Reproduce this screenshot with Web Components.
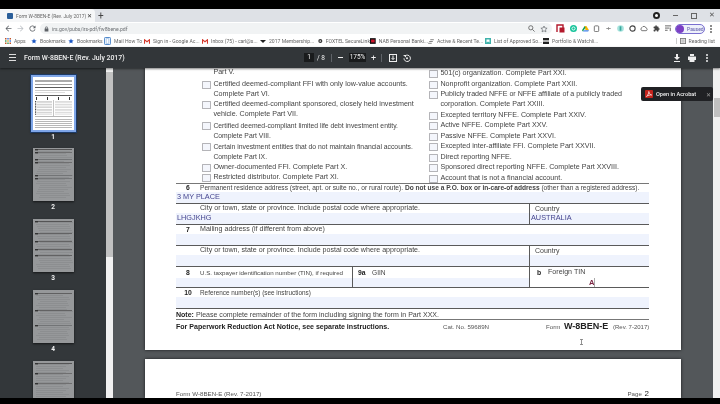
<!DOCTYPE html>
<html><head><meta charset="utf-8"><style>
html,body{margin:0;padding:0;background:#000;width:720px;height:404px;overflow:hidden}
body{display:flex;flex-direction:column;font-family:"Liberation Sans",Arial,sans-serif;filter:blur(.3px)}
.blk{height:9px;flex:none;background:#000}.blk.b{height:6px}
#main{flex:1;display:flex;min-height:0;background:#525659}
</style></head><body>
<div class="blk"></div>
<x-chrome></x-chrome>
<x-pdfbar></x-pdfbar>
<div id="main"><x-thumbs></x-thumbs><x-viewer>
<x-page first>
 <x-columns>
  <div slot="l">
   <x-check nobox>Part V.</x-check>
   <x-check m="2.5">Certified deemed-compliant FFI with only low-value accounts.<br>Complete Part VI.</x-check>
   <x-check m="1.25">Certified deemed-compliant sponsored, closely held investment<br>vehicle. Complete Part VII.</x-check>
   <x-check m="2" style="font-size:6.8px">Certified deemed-compliant limited life debt investment entity.<br>Complete Part VIII.</x-check>
   <x-check m="2" style="font-size:6.8px">Certain investment entities that do not maintain financial accounts.<br>Complete Part IX.</x-check>
   <x-check m="2">Owner-documented FFI. Complete Part X.</x-check>
   <x-check m=".5">Restricted distributor. Complete Part XI.</x-check>
  </div>
  <div slot="r">
   <x-check m="1.25">501(c) organization. Complete Part XXI.</x-check>
   <x-check m="1">Nonprofit organization. Complete Part XXII.</x-check>
   <x-check m="1" style="font-size:7.1px">Publicly traded NFFE or NFFE affiliate of a publicly traded<br>corporation. Complete Part XXIII.</x-check>
   <x-check m="1.5">Excepted territory NFFE. Complete Part XXIV.</x-check>
   <x-check m="1">Active NFFE. Complete Part XXV.</x-check>
   <x-check m="1">Passive NFFE. Complete Part XXVI.</x-check>
   <x-check m="1">Excepted inter-affiliate FFI. Complete Part XXVII.</x-check>
   <x-check m="1">Direct reporting NFFE.</x-check>
   <x-check m="1">Sponsored direct reporting NFFE. Complete Part XXVIII.</x-check>
   <x-check m="1">Account that is not a financial account.</x-check>
  </div>
 </x-columns>
 <x-row h="21" top>
  <x-cell style="flex:1;--lh:8px" num="6" value="3 MY PLACE">Permanent residence address (street, apt. or suite no., or rural route). <b>Do not use a P.O. box or in-care-of address</b> (other than a registered address).</x-cell>
 </x-row>
 <x-row h="21">
  <x-cell style="width:353px;--fs:7.1px" num=" " value="LHGJKHG">City or town, state or province. Include postal code where appropriate.</x-cell>
  <x-cell style="flex:1;--fs:7px" side value="AUSTRALIA">Country</x-cell>
 </x-row>
 <x-row h="21"><x-cell style="flex:1;--fs:7.1px" num="7">Mailing address (if different from above)</x-cell></x-row>
 <x-row h="21">
  <x-cell style="width:353px;--fs:7.1px" num=" ">City or town, state or province. Include postal code where appropriate.</x-cell>
  <x-cell style="flex:1;--fs:7px" side>Country</x-cell>
 </x-row>
 <x-row h="21">
  <x-cell style="width:176px;--fs:6.2px;--lh:11px" num="8">U.S. taxpayer identification number (TIN), if required</x-cell>
  <x-cell style="width:177px;--fs:6.6px;--lh:11px" side num="9a" w="14">GIIN</x-cell>
  <x-cell style="flex:1;--fs:7.1px;--lh:11px;--pl:7px" side num="b" w="11" nofill typed="A">Foreign TIN</x-cell>
 </x-row>
 <x-row h="21"><x-cell style="flex:1;--fs:6.4px" num="10">Reference number(s) (see instructions)</x-cell></x-row>
 <x-note></x-note>
 <x-pagefoot></x-pagefoot>
</x-page>
<x-page>
 <x-nextpage></x-nextpage>
</x-page>
<x-acrobat></x-acrobat>
<x-ibeam></x-ibeam>
</x-viewer></div>
<div class="blk b"></div>
<script>
const def=(name,html)=>customElements.define(name,class extends HTMLElement{
  connectedCallback(){ if(this.shadowRoot) return; const r=this.attachShadow({mode:'open'}); r.innerHTML=typeof html==='function'?html(this):html; }
});

const ico={
 back:'<svg width="9" height="9" viewBox="0 0 24 24"><path d="M20 11H7.8l5.6-5.6L12 4l-8 8 8 8 1.4-1.4L7.8 13H20z" fill="#5f6368"/></svg>',
 fwd:'<svg width="9" height="9" viewBox="0 0 24 24"><path d="M4 11h12.2l-5.6-5.6L12 4l8 8-8 8-1.4-1.4 5.6-5.6H4z" fill="#bdc1c6"/></svg>',
 reload:'<svg width="9" height="9" viewBox="0 0 24 24"><path d="M17.6 6.4A8 8 0 1 0 19.7 14h-2.1A6 6 0 1 1 12 6c1.7 0 3.1.7 4.2 1.8L13 11h7V4z" fill="#5f6368"/></svg>',
 lock:'<svg width="5" height="6" viewBox="0 0 12 14"><path d="M3 6V4a3 3 0 0 1 6 0v2h1.500v7h-9V6zm1.500 0h3V4a1.500 1.500 0 0 0-3 0z" fill="#5f6368"/></svg>',
 star:'<svg width="8" height="8" viewBox="0 0 24 24"><path d="M12 3l2.800 6 6.500.7-4.800 4.400 1.300 6.400L12 17.300l-5.800 3.200 1.300-6.400L2.700 9.700 9.200 9z" fill="none" stroke="#5f6368" stroke-width="2"/></svg>',
 bm:'<svg width="6" height="6" viewBox="0 0 24 24"><path d="M12 2l3 7 7.500.6-5.700 4.900 1.800 7.500L12 18l-6.600 4 1.800-7.500L1.500 9.600 9 9z" fill="#1a56c4"/></svg>',
 apps:'<svg width="6" height="6" viewBox="0 0 8 8"><g fill="#c5562a"><rect width="2" height="2"/><rect x="3" width="2" height="2" fill="#3f7de0"/><rect x="6" width="2" height="2"/><rect y="3" width="2" height="2" fill="#3f9a55"/><rect x="3" y="3" width="2" height="2" fill="#d9a32c"/><rect x="6" y="3" width="2" height="2" fill="#3f7de0"/><rect y="6" width="2" height="2"/><rect x="3" y="6" width="2" height="2" fill="#3f9a55"/><rect x="6" y="6" width="2" height="2"/></g></svg>',
 gmail:'<svg width="6" height="5" viewBox="0 0 8 7"><rect width="8" height="7" fill="#fff"/><path d="M.5 6.500V1L4 3.800 7.500 1v5.500" fill="none" stroke="#d5392c" stroke-width="1.500"/></svg>',
 book:'<svg width="7" height="8" viewBox="0 0 8 9"><rect x=".5" y=".5" width="7" height="8" rx="1" fill="#e7f0fb" stroke="#3b7ac4"/><rect x="2.500" y="2" width="3" height="5" fill="#fff" stroke="#7aa7d8" stroke-width=".5"/></svg>',
 dark:'<svg width="6" height="4" viewBox="0 0 8 5"><path d="M0 1h8L4 5z" fill="#222"/></svg>',
 fox:'<svg width="6" height="6" viewBox="0 0 8 8"><circle cx="4" cy="4" r="3.500" fill="#333"/><circle cx="4" cy="4" r="1.500" fill="#ddd"/></svg>',
 nab:'<svg width="6" height="6" viewBox="0 0 8 8"><rect width="8" height="8" fill="#111"/><rect x="1.500" y="2" width="5" height="4" fill="#d0142c"/></svg>',
 lines:'<svg width="6" height="5" viewBox="0 0 8 7"><path d="M3 1h5M1.500 3.500h5M0 6h5" stroke="#555" stroke-width="1"/></svg>',
 teal:'<svg width="6" height="6" viewBox="0 0 8 8"><rect width="8" height="8" fill="#3fb2ab"/><path d="M2 2h4v4L4 4.800 2 6z" fill="#fff"/></svg>',
 port:'<svg width="6" height="6" viewBox="0 0 8 8"><rect width="8" height="8" fill="#222"/><rect y="3" width="8" height="2" fill="#ddd"/></svg>',
 list:'<svg width="6" height="6" viewBox="0 0 7 7"><rect x=".5" y=".5" width="6" height="6" fill="none" stroke="#777"/><path d="M1.500 2.200h4M1.500 3.500h4M1.500 4.800h4" stroke="#777" stroke-width=".6"/></svg>',
};

def('x-chrome',()=>{
 const bms=[['apps','Apps',26],['bm','Bookmarks',37],['bm','Bookmarks',36],['book','Mail How To',40],['gmail','Sign in - Google Ac...',58],['gmail','Inbox (75) - carl@s...',58],['dark','2017 Membership...',58],['fox','FOXTEL SecureLink',52],['nab','NAB Personal Banki...',58],['lines','Active &amp; Recent Te...',57],['teal','List of Approved So...',58],['port','Portfolio &amp; Watchli...',58]];
 const exts=[
  '<svg width="9" height="9" viewBox="0 0 9 9"><path d="M1 8V1h6v3" fill="none" stroke="#b3192c" stroke-width="1.400"/><rect x="3.500" y="3.500" width="5" height="5" fill="#b3192c"/></svg>',
  '<svg width="7" height="7" viewBox="0 0 8 8"><circle cx="4" cy="4" r="4" fill="#15c39a"/><circle cx="4" cy="4" r="1.800" fill="none" stroke="#fff"/></svg>',
  '<svg width="7" height="7" viewBox="0 0 8 8"><path d="M3 1h2l3 5H4z" fill="#f4b400"/><path d="M3 1L0 6l1 1.500L4 3z" fill="#0f9d58"/><path d="M1 7.500h6L8 6H2.500z" fill="#4285f4"/></svg>',
  '<svg width="7" height="7" viewBox="0 0 8 8"><rect x="1.500" y="1" width="5" height="6.500" rx="1" fill="none" stroke="#666"/></svg>',
  '<svg width="7" height="7" viewBox="0 0 8 8"><path d="M1.500 4h5M4 2.500v3" stroke="#888"/></svg>',
  '<svg width="7" height="7" viewBox="0 0 8 8"><circle cx="4" cy="4" r="3.800" fill="#a7e3dd"/><rect x="3" y="1.500" width="2" height="5" fill="#38a89d"/></svg>',
  '<svg width="7" height="7" viewBox="0 0 8 8"><circle cx="4" cy="4" r="3" fill="none" stroke="#444" stroke-width="1.300"/></svg>',
  '<svg width="8" height="7" viewBox="0 0 9 8"><path d="M2 6.500a2 2 0 0 1 .2-3.600 2.500 2.500 0 0 1 4.600.5A1.600 1.600 0 0 1 7 6.500z" fill="none" stroke="#666"/></svg>',
  '<svg width="7" height="7" viewBox="0 0 24 24"><path d="M20.500 11H19V7a2 2 0 0 0-2-2h-4V3.500a2.500 2.500 0 0 0-5 0V5H4a2 2 0 0 0-2 2v3.800h1.500a2.700 2.700 0 0 1 0 5.400H2V20a2 2 0 0 0 2 2h3.800v-1.500a2.700 2.700 0 0 1 5.400 0V22H17a2 2 0 0 0 2-2v-4h1.500a2.500 2.500 0 0 0 0-5z" fill="#444"/></svg>',
  '<svg width="7" height="7" viewBox="0 0 8 8"><path d="M0 1h7M0 3.500h5M0 6h3" stroke="#555"/><path d="M6 3v4" stroke="#555"/></svg>'];
 return `<style>
 :host{display:block;flex:none;font-family:Roboto,"Liberation Sans",sans-serif;color:#555}
 .tabs{height:13px;background:#dee1e6;display:flex;align-items:center}
 .tab{width:95px;height:13px;margin-left:0;background:#f6f7f8;border-radius:0 4px 0 0;display:flex;align-items:center;box-sizing:border-box;padding:0 3px 0 7px;gap:3px;font-size:4.900px;color:#666;white-space:nowrap}
 .fav{width:6px;height:6px;background:#2b5f9a;border-radius:1px;flex:none}
 .tt{flex:1;min-width:0}
 .plus{margin-left:3px;font-size:10px;color:#444;line-height:10px}
 .sp{flex:1}
 .win{display:flex;align-items:center;margin-right:5px;gap:9px;color:#555}
 .tb{height:13px;background:#fff;display:flex;align-items:center;padding:0 4px;box-sizing:border-box}
 .nav{display:flex;gap:3px;margin-right:3px}
 .omni{width:512px;flex:none;height:11px;border-radius:6px;background:#f1f3f4;display:flex;align-items:center;padding:0 4px;box-sizing:border-box;font-size:5.100px;gap:3px;color:#6a6e72}
 .omni .end{margin-left:auto;display:flex;gap:5px;align-items:center}
 .ext{display:flex;align-items:center;width:116px;margin-left:4px;justify-content:space-between;flex:none}
 .paused{width:30px;height:10px;border:1px solid #7a6fd0;border-radius:6px;box-sizing:border-box;display:flex;align-items:center;gap:3px;font-size:5px;color:#5a55a8;margin-left:3px;flex:none;background:#eef1fb}
 .paused i{width:8px;height:8px;background:#7b3fc4;border-radius:50%;flex:none}
 .dots{width:2px;height:2px;background:#666;border-radius:50%;box-shadow:0 -3px #666,0 3px #666;margin-left:5px;flex:none}
 .bm{height:12px;background:#fff;display:flex;align-items:center;padding-left:5px;font-size:5.100px;color:#666;white-space:nowrap}
 .it{display:flex;align-items:center;gap:3px;flex:none;overflow:hidden}
 .rl{margin-left:auto;display:flex;align-items:center;gap:3px;margin-right:5px;border-left:1px solid #ccc;padding-left:3px}
 </style>
 <div class="tabs"><div class="tab"><span class="fav"></span><span class="tt">Form W-8BEN-E (Rev. July 2017)</span><span style="color:#333;font-size:6px">✕</span></div><span class="plus">+</span><span class="sp"></span>
 <div class="win"><span style="width:3px;height:3px;border-radius:50%;border:2px solid #222;background:#fff"></span><span style="width:5px;height:1px;background:#666;margin-left:4px"></span><span style="width:4px;height:4px;border:1px solid #666;margin-left:4px"></span><span style="font-size:7px;color:#555;margin-left:3px;line-height:7px">✕</span></div></div>
 <div class="tb"><div class="nav">${ico.back}${ico.fwd}${ico.reload}</div>
 <div class="omni">${ico.lock}<span>irs.gov/pubs/irs-pdf/fw8bene.pdf</span><span class="end"><svg width="7" height="7" viewBox="0 0 8 8"><circle cx="3.200" cy="3.200" r="2.400" fill="none" stroke="#666"/><path d="M5 5l2.500 2.500" stroke="#666"/></svg>${ico.star}</span></div>
 <div class="ext">${exts.join('')}</div>
 <div class="paused"><i></i>Paused</div><div class="dots"></div></div>
 <div class="bm">${bms.map(b=>`<div class="it" style="width:${b[2]}px">${ico[b[0]]}<span>${b[1]}</span></div>`).join('')}<div class="rl">${ico.list}<span>Reading list</span></div></div>`;
});

def('x-pdfbar',`<style>
 :host{display:flex;align-items:center;flex:none;height:21px;background:#323639;color:#f1f1f1;font-family:Roboto,"Liberation Sans",sans-serif;font-size:6.500px;box-shadow:0 1px 2px rgba(0,0,0,.5);position:relative;z-index:2}
 .m{margin-left:9px;width:7px;height:5px;border-top:1px solid #ddd;border-bottom:1px solid #ddd;position:relative;margin-right:8px;flex:none}
 .m:after{content:"";position:absolute;left:0;right:0;top:2px;height:1px;background:#ddd}
 .t{width:280px;font-weight:500;white-space:nowrap;flex:none;font-size:6.900px}
 .box{background:#191b1c;height:9px;line-height:9px;text-align:center;flex:none}
 .d{width:1px;height:8px;background:#5f6368;flex:none}
 svg{flex:none}
 </style>
 <span class="m"></span><span class="t">Form W-8BEN-E (Rev. July 2017)</span>
 <span class="box" style="width:10px">1</span><span style="width:17px;padding-left:3px;box-sizing:border-box;flex:none">/ 8</span><span class="d"></span>
 <span style="width:5px;height:1px;background:#eee;margin:0 6px;flex:none"></span><span class="box" style="width:17px">175%</span><span style="margin:0 5px;font-size:9px;flex:none">+</span><span class="d"></span>
 <svg style="margin-left:7px" width="8" height="8" viewBox="0 0 8 8"><rect x=".5" y=".5" width="7" height="7" fill="none" stroke="#eee"/><path d="M4 1.500v4M2.500 4L4 5.500 5.500 4" stroke="#eee" fill="none"/></svg>
 <svg style="margin-left:6px" width="8" height="8" viewBox="0 0 8 8"><path d="M2 2a3.200 3.200 0 1 1-1 2.300" fill="none" stroke="#eee"/><path d="M0 1l3 0 0 2.500z" fill="#eee"/><circle cx="4" cy="4.300" r="1" fill="#eee"/></svg>
 <span style="flex:1"></span>
 <svg width="8" height="8" viewBox="0 0 8 8"><path d="M3 0h2v3h2L4 6 1 3h2zM1 7h6v1H1z" fill="#eee"/></svg>
 <svg style="margin-left:7px" width="8" height="8" viewBox="0 0 8 8"><path d="M2 0h4v2H2zM0 2.500h8V6H6.500v2h-5V6H0z" fill="#eee"/></svg>
 <span style="width:2px;height:2px;border-radius:50%;background:#eee;box-shadow:0 -3px #eee,0 3px #eee;margin:0 12px 0 10px;flex:none"></span>`);

const thumb=(seed,first)=>{
 let out='';
 if(first){
  out+='<rect x="2" y="3" width="37" height="2" fill="#aaa"/><rect x="2" y="7" width="37" height=".7" fill="#777"/>';
  out+='<rect x="2" y="10" width="37" height=".8" fill="#333"/><rect x="2" y="13" width="37" height=".6" fill="#aaa"/><rect x="2" y="15.500" width="30" height=".5" fill="#bbb"/><rect x="2" y="18" width="37" height=".8" fill="#333"/>';
  for(let i=0;i<4;i++)out+=`<rect x="${3+i*11}" y="20" width="1" height="3" fill="#333"/>`;
  for(let y=24;y<38;y+=1.6)out+=`<rect x="2" y="${y}" width="1.200" height="1" fill="#444"/><rect x="4" y="${y}" width="15" height=".5" fill="#aaa"/><rect x="22" y="${y}" width="17" height=".5" fill="#bbb"/>`;
  out+='<rect x="20" y="23" width=".5" height="16" fill="#888"/>';
  for(const y of [39,42,44,46,48,50])out+=`<rect x="2" y="${y}" width="37" height=".6" fill="#888"/>`;
  return `<svg width="41" height="53" viewBox="0 0 41 53">${out}</svg>`;
 }
 const bands={2:[[1,'#444'],[4,'#666'],[11,'#6c6e70'],[14,'#666'],[27,'#6c6e70'],[30,'#6c6e70']],3:[[2,'#444'],[14,'#555'],[22,'#555'],[30,'#555'],[36,'#555']],4:[[3,'#555'],[20,'#555'],[35,'#6c6e70']],5:[[2,'#444'],[12,'#666'],[22,'#666']]}[seed];
 for(let y=3;y<50;y+=2)out+=`<rect x="${3+(y*seed%5)}" y="${y}" width="${33-(y*seed*3%9)}" height=".5" fill="#838587"/>`;
 for(const b of bands)out+=`<rect x="2" y="${b[0]}" width="37" height=".8" fill="${b[1]}"/><rect x="2" y="${b[0]}" width="3" height="1.400" fill="#333"/>`;
 return `<svg width="41" height="53" viewBox="0 0 41 53">${out}</svg>`;
};
def('x-thumbs',`<style>
 :host{display:flex;flex:none;width:113px;height:330px;background:#33373a;overflow:hidden}
 .list{width:106px;display:flex;flex-direction:column;align-items:center;flex:none;padding-top:7px;box-sizing:border-box}
 .p{background:#96989a;width:41px;height:53px;box-shadow:0 1px 2px rgba(0,0,0,.6);flex:none;line-height:0}
 .p.sel{background:#fff;border:2px solid #7fa6e8;outline:1px solid #1d3a66}
 .n{color:#f1f1f1;font:bold 6.500px Roboto,"Liberation Sans",sans-serif;height:17px;line-height:10px;margin-top:1px;flex:none}
 .sb{width:7px;background:#f1f1f1;flex:none;display:flex;flex-direction:column}
 .ar{height:4px;flex:none}
 .th{height:185px;background:#c1c1c1;flex:none}
 </style>
 <div class="list">
 <div class="p sel">${thumb(1,true)}</div><div class="n" style="margin-top:0;height:16px">1</div>
 <div class="p">${thumb(2)}</div><div class="n">2</div>
 <div class="p">${thumb(3)}</div><div class="n">3</div>
 <div class="p">${thumb(4)}</div><div class="n">4</div>
 <div class="p">${thumb(5)}</div></div>
 <div class="sb"><div class="ar"></div><div class="th"></div></div>`);

def('x-viewer',`<style>
 :host{display:flex;flex-direction:column;flex:1;height:330px;overflow:hidden;position:relative;background:#53575a;padding:0 39px 0 32px;box-sizing:border-box;font-family:"Liberation Sans",Arial,sans-serif}
 .sb{position:absolute;right:0;top:0;bottom:0;width:7px;background:#f1f1f1}
 .th{position:absolute;left:1px;right:0;top:30px;height:19px;background:#c1c1c1}
 </style><slot></slot><div class="sb"><div class="th"></div></div>`);

def('x-page',`<style>
 :host{display:block;background:#fff;box-shadow:0 0 3px rgba(0,0,0,.7);flex:none;padding:0 32px 0 31px;height:282px;box-sizing:border-box;overflow:hidden;color:#333;font-size:7px}
 :host(:not([first])){margin-top:9px;height:39px}
 </style><slot></slot>`);

def('x-columns',`<style>
 :host{display:flex;height:115px;font-size:7.150px;line-height:9.500px;color:#444}
 .l{width:253px;padding-left:26px;box-sizing:border-box;flex:none}.r{flex:1}
 </style><div class="l"><slot name="l"></slot></div><div class="r"><slot name="r"></slot></div>`);

def('x-check',el=>`<style>
 :host{display:flex;margin-top:${el.getAttribute('m')||0}px;white-space:nowrap}
 i{width:7px;height:6px;border:.8px solid #b4b4b8;background:#f4f6fc;flex:none;margin:1px 2.400px 0 0;border-radius:.5px;${el.hasAttribute('nobox')?'visibility:hidden':''}}
 </style><i></i><span><slot></slot></span>`);

def('x-row',el=>`<style>
 :host{display:flex;height:${el.getAttribute('h')}px;border-bottom:1px solid #5a5a5a;box-sizing:border-box;${el.hasAttribute('top')?'border-top:1.500px solid #777;':''}}
 </style><slot></slot>`);

def('x-cell',el=>{
 const num=el.getAttribute('num'),v=el.getAttribute('value'),w=el.getAttribute('w')||24,side=el.hasAttribute('side'),typed=el.getAttribute('typed');
 return `<style>
 :host{display:flex;flex-direction:column;box-sizing:border-box;flex:none;${side?'border-left:1px solid #5a5a5a;':''}min-width:0}
 .lb{display:flex;height:var(--lh,9px);line-height:var(--lh,9px);font-size:var(--fs,6.600px);color:#444;white-space:nowrap;flex:none;${side?'padding-left:var(--pl,5px);':''}}
 .n{font-weight:bold;color:#222;flex:none;${side?'':'text-align:center;'}width:${w}px;font-size:6.800px}
 .f{flex:1;background:${el.hasAttribute('nofill')?'#fff':'#eff3fd'};color:#45458f;font-size:7.300px;line-height:10px;padding-left:1px;position:relative;overflow:hidden}
 .ty{position:absolute;left:59px;top:0;color:#7a2442;font-size:7.500px;font-weight:bold;border-right:.6px solid #aaa;line-height:9px}
 </style><div class="lb">${num?`<span class="n">${num}</span>`:''}<span><slot></slot></span></div><div class="f">${v||''}${typed?`<span class="ty">${typed}</span>`:''}</div>`});

def('x-note',`<style>
 :host{display:block;height:9px;margin-top:1px;border-bottom:1.500px solid #777;font-size:7.040px;line-height:9px;color:#444;white-space:nowrap}
 b{color:#222}
 </style><b>Note:</b> Please complete remainder of the form including signing the form in Part XXX.`);

def('x-pagefoot',`<style>
 :host{display:flex;align-items:baseline;height:12px;line-height:12px;white-space:nowrap;color:#333}
 b.a{font-size:7.050px;width:267px;flex:none;color:#222}
 .c{font-size:6.200px;width:103px;flex:none;color:#555}
 .f{font-size:6.200px;color:#555;width:18px;flex:none}
 .w{font-size:9px;font-weight:bold;width:49px;flex:none;color:#222}
 .r{font-size:6px;color:#555}
 </style><b class="a">For Paperwork Reduction Act Notice, see separate instructions.</b><span class="c">Cat. No. 59689N</span><span class="f">Form</span><span class="w">W-8BEN-E</span><span class="r">(Rev. 7-2017)</span>`);

def('x-nextpage',`<style>
 :host{display:flex;justify-content:space-between;align-items:baseline;padding-top:31px;color:#555;font-size:6.200px;line-height:8px}
 b{font-size:8px;color:#222;font-weight:normal;margin-left:1px}
 </style><span>Form W-8BEN-E (Rev. 7-2017)</span><span>Page <b>2</b></span>`);

def('x-acrobat',`<style>
 :host{position:absolute;left:528px;top:19px;width:72px;height:14px;background:#202124;border-radius:2px;display:flex;align-items:center;color:#eee;font:500 5.600px Roboto,"Liberation Sans",sans-serif;box-sizing:border-box;padding-left:4px;white-space:nowrap}
 svg{margin-right:3px}
 .x{margin-left:auto;margin-right:2px;color:#999;font-size:6px}
 </style><svg width="8" height="8" viewBox="0 0 8 8"><rect width="8" height="8" rx="1" fill="#c4231c"/><path d="M1.500 6.500C3 5 4 3 3.800 1.500 4.200 3.500 5 4.500 6.700 5 5 4.800 3 5.200 1.500 6.500z" fill="none" stroke="#fff" stroke-width=".7"/></svg><span>Open in Acrobat</span><span class="x">✕</span>`);

def('x-ibeam',`<style>
 :host{position:absolute;left:467px;top:271px;width:3px;height:6px;display:block}
 svg{display:block}
 </style><svg width="3" height="6" viewBox="0 0 3 6"><path d="M0 .5h3M1.500 .5v5M0 5.500h3" stroke="#777" stroke-width=".8"/></svg>`);
</script>
</body></html>
